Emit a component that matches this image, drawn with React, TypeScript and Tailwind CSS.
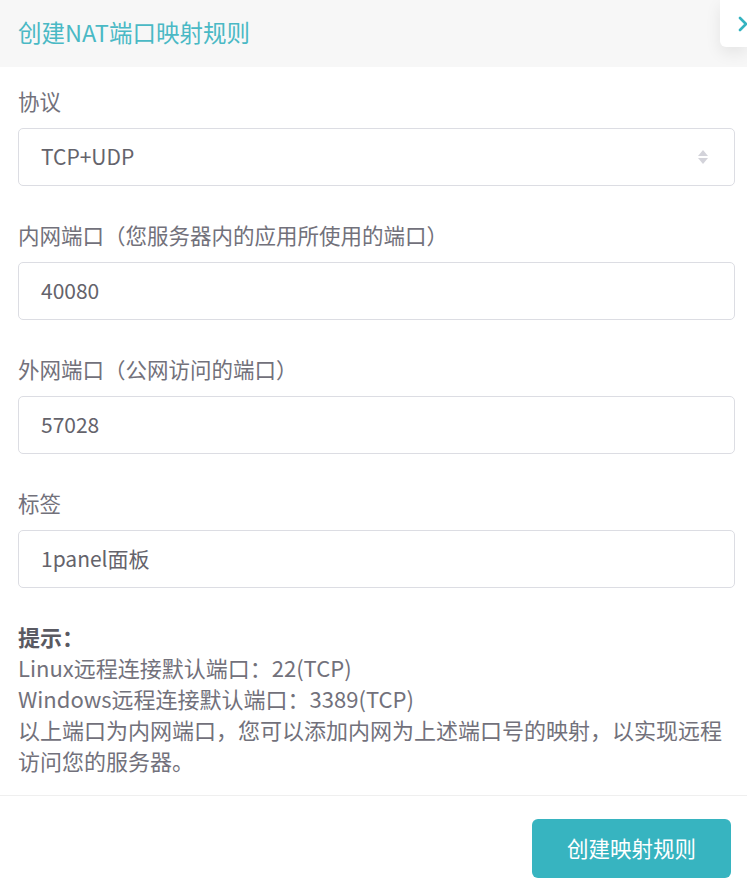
import { ChevronRight } from "lucide-react"

const font = { fontFamily: '"Noto Sans CJK SC", "Noto Sans", sans-serif' }

function Field({ label, value, select }: { label: string; value: string; select?: boolean }) {
  return (
    <div className="mt-[38px] first:mt-0">
      <div className="h-[22px] leading-[22px] text-[21.5px] text-[#72717b]">{label}</div>
      <div className="mt-[16px] flex h-[58px] items-center justify-between rounded-[5px] border border-[#dcdde3] bg-white px-[22px]">
        <span className="text-[21px] text-[#64636b]">{value}</span>
        {select && (
          <svg width="14" height="18" viewBox="0 0 14 18" className="mr-[2px]">
            <path d="M7 2 L12 8 L2 8 Z" fill="#d3d3da" />
            <path d="M7 16 L12 10 L2 10 Z" fill="#d3d3da" />
          </svg>
        )}
      </div>
    </div>
  )
}

export default function App() {
  return (
    <div className="relative h-[885px] w-[747px] overflow-hidden bg-white" style={font}>
      {/* Header */}
      <div className="flex h-[67px] items-center bg-[#f7f7f7] px-[18px] pb-[2px]">
        <h3 className="text-[23.5px] text-[#4ab9c5]">创建NAT端口映射规则</h3>
      </div>

      {/* Collapse tab */}
      <div className="absolute right-0 top-0 flex h-[47px] w-[27px] items-center justify-end rounded-bl-[6px] bg-white shadow-[0_6px_16px_rgba(0,0,0,0.08)]">
        <ChevronRight className="-mr-[8px] h-[24px] w-[24px] text-[#34b3c0]" strokeWidth={2.6} />
      </div>

      {/* Form */}
      <div className="px-[18px] pr-[12px] pt-[23px]">
        <Field label="协议" value="TCP+UDP" select />
        <Field label="内网端口（您服务器内的应用所使用的端口）" value="40080" />
        <Field label="外网端口（公网访问的端口）" value="57028" />
        <Field label="标签" value="1panel面板" />

        {/* Tips */}
        <div className="mt-[33px] text-[22px] leading-[31px] text-[#72717b]">
          <p className="font-bold text-[#5a5a62]">提示：</p>
          <p>Linux远程连接默认端口：22(TCP)</p>
          <p>Windows远程连接默认端口：3389(TCP)</p>
          <p>以上端口为内网端口，您可以添加内网为上述端口号的映射，以实现远程访问您的服务器。</p>
        </div>
      </div>

      {/* Footer */}
      <div className="mt-[19px] border-t border-[#efefef] px-[16px] pt-[23px]">
        <div className="flex justify-end">
          <button className="h-[59px] w-[199px] rounded-[6px] bg-[#37b4c0] text-[21.5px] text-white">
            创建映射规则
          </button>
        </div>
      </div>
    </div>
  )
}
